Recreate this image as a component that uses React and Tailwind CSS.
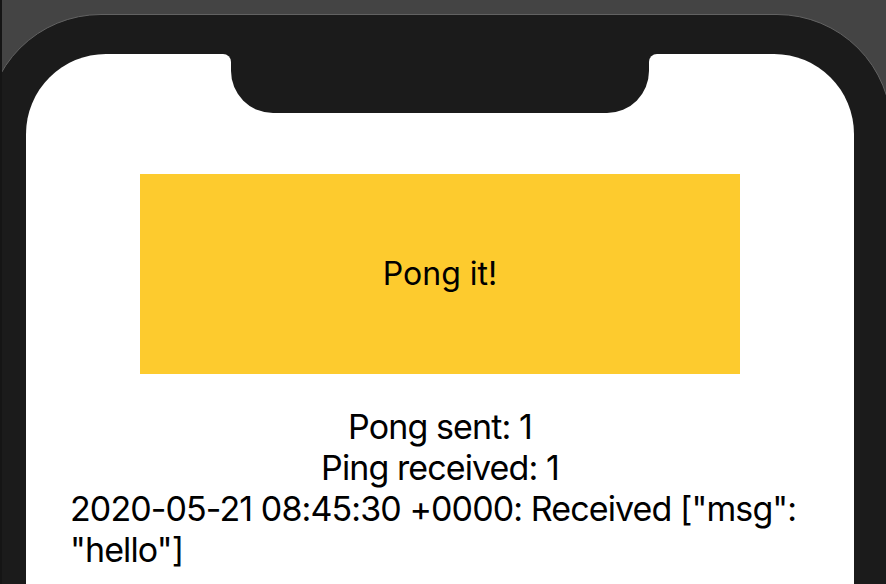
export default function App() {
  return (
    <div
      className="h-[584px] w-[886px] overflow-hidden border-l-2 border-[#151515] bg-[#444444] pt-[14px]"
      style={{ fontFamily: "Inter, 'Noto Sans', sans-serif" }}
    >
      {/* device frame */}
      <div className="ml-[-16px] h-[700px] w-[906px] shrink-0 rounded-[115px] border border-[#626262] bg-[#1b1b1b] p-[39px]">
        {/* screen */}
        <div className="relative h-[620px] w-[828px] rounded-t-[80px] bg-white">
          {/* notch */}
          <div className="absolute left-[205px] top-0 h-[59px] w-[418px] rounded-b-[42px] bg-[#1b1b1b]" />
          <div className="absolute left-[197px] top-0 h-[8px] w-[8px] bg-[#1b1b1b]">
            <div className="h-full w-full rounded-tr-[8px] bg-white" />
          </div>
          <div className="absolute left-[623px] top-0 h-[8px] w-[8px] bg-[#1b1b1b]">
            <div className="h-full w-full rounded-tl-[8px] bg-white" />
          </div>

          <div className="flex flex-col items-center pt-[120px] text-black">
            <button className="flex h-[200px] w-[600px] items-center justify-center bg-[#fdcb2e] text-[32px] leading-none">
              Pong it!
            </button>
            <div className="mt-[32px] w-full px-[44px] text-[34px] leading-[41px] tracking-[-0.9px]">
              <p className="text-center">Pong sent: 1</p>
              <p className="text-center">Ping received: 1</p>
              <p className="whitespace-nowrap text-left">
                2020-05-21 08:45:30 +0000: Received ["msg":
                <br />
                "hello"]
              </p>
            </div>
          </div>
        </div>
      </div>
    </div>
  );
}
